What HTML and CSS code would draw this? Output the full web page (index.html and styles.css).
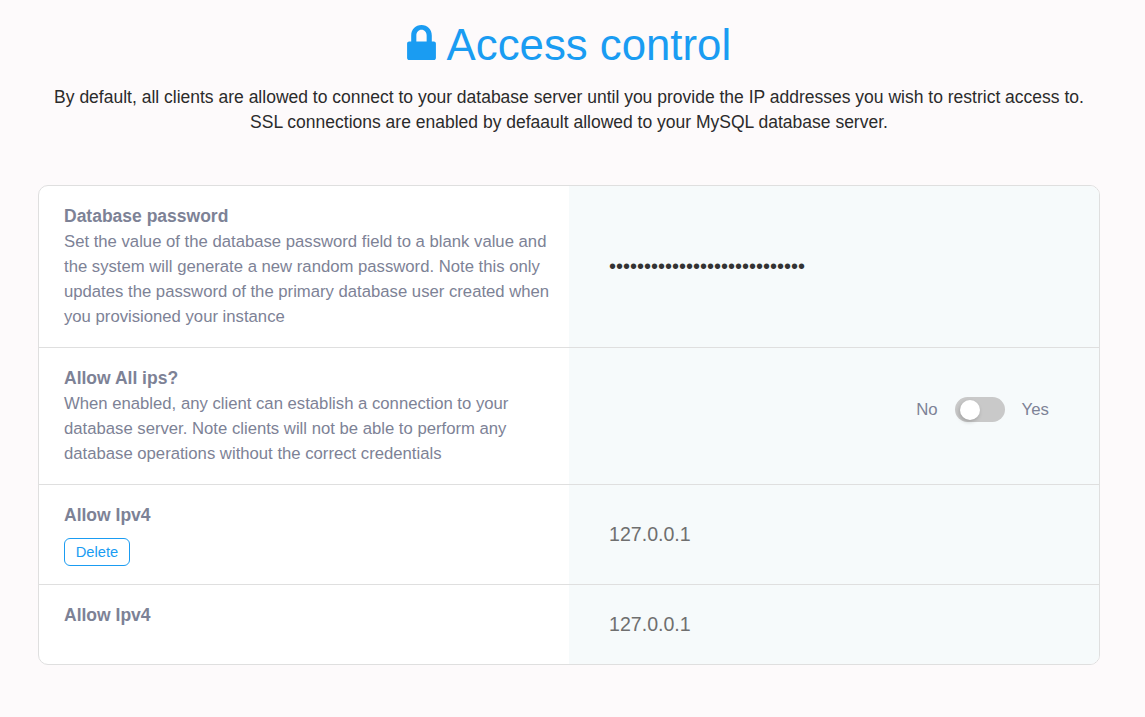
FILE: index.html
```html
<!DOCTYPE html>
<html lang="en">
<head>
    <meta charset="UTF-8">
    <meta name="viewport" content="width=device-width, initial-scale=1.0">
    <title>Access control</title>
    <link rel="stylesheet" href="styles.css">
</head>
<body>
    <header class="intro">
        <h1>
            <svg class="lock" viewBox="0 0 28 34" aria-hidden="true">
                <path d="M14 0C8.2 0 4 4.4 4 10.2V16H2C.9 16 0 16.9 0 18V32C0 33.1.9 34 2 34H26C27.1 34 28 33.1 28 32V18C28 16.9 27.1 16 26 16H24V10.2C24 4.4 19.8 0 14 0ZM14 4.6C17 4.6 19 7 19 10.2V16H9V10.2C9 7 11 4.6 14 4.6Z"/>
            </svg>
            Access control
        </h1>
        <p>By default, all clients are allowed to connect to your database server until you provide the IP addresses you wish to restrict access to.<br>SSL connections are enabled by defaault allowed to your MySQL database server.</p>
    </header>

    <section class="card">
        <div class="row row-password">
            <div class="info">
                <h3>Database password</h3>
                <p>Set the value of the database password field to a blank value and the system will generate a new random password. Note this only updates the password of the primary database user created when you provisioned your instance</p>
            </div>
            <div class="field">
                <span class="dots">••••••••••••••••••••••••••••</span>
            </div>
        </div>
        <div class="row row-allow">
            <div class="info">
                <h3>Allow All ips?</h3>
                <p>When enabled, any client can establish a connection to your database server. Note clients will not be able to perform any database operations without the correct credentials</p>
            </div>
            <div class="field field-toggle">
                <span>No</span>
                <span class="toggle"><span class="knob"></span></span>
                <span>Yes</span>
            </div>
        </div>
        <div class="row row-ip">
            <div class="info">
                <h3>Allow Ipv4</h3>
                <button class="btn-delete" type="button">Delete</button>
            </div>
            <div class="field">
                <span class="ip">127.0.0.1</span>
            </div>
        </div>
        <div class="row row-ip-last">
            <div class="info">
                <h3>Allow Ipv4</h3>
            </div>
            <div class="field">
                <span class="ip">127.0.0.1</span>
            </div>
        </div>
    </section>
</body>
</html>
```

FILE: styles.css
```css
body {
    font-family: "Liberation Sans", Arial, sans-serif;
    margin: 0;
    padding: 0 45px 52px 38px;
    background-color: #fdfafb;
    color: #2b2b2b;
}
.intro {
    text-align: center;
    height: 185px;
    padding-top: 19px;
    box-sizing: border-box;
}
.intro h1 {
    margin: 0;
    font-size: 43.75px;
    font-weight: 400;
    line-height: 52px;
    color: #1a9cf2;
}
.intro p {
    margin: 14px -20px 0;
    font-size: 17.5px;
    line-height: 25px;
}
.lock {
    width: 29px;
    height: 35px;
    margin-right: 1px;
    fill: #1a9cf2;
}
.card {
    border: 1px solid #dfdfdf;
    border-radius: 10px;
    background-color: #fff;
    overflow: hidden;
}
.row {
    display: grid;
    grid-template-columns: 530px 1fr;
    border-bottom: 1px solid #dfdfdf;
}
.row:last-child {
    border-bottom: 0;
}
.row-password { height: 161px; }
.row-allow { height: 136px; }
.row-ip { height: 99px; }
.row-ip-last { height: 79px; }
.info {
    padding: 20px 15px 0 25px;
}
.info h3 {
    margin: 0;
    font-size: 17.5px;
    line-height: 20px;
    font-weight: 700;
    color: #7d8296;
}
.info p {
    margin: 3px 0 0;
    font-size: 16.7px;
    line-height: 25px;
    color: #7d8296;
}
.field {
    background-color: #f6fafb;
    padding-left: 40px;
    display: flex;
    align-items: center;
}
.dots {
    font-size: 20px;
    color: #333;
}
.ip {
    font-size: 19.6px;
    color: #6f6f6f;
}
.field-toggle {
    justify-content: flex-end;
    gap: 17px;
    padding-right: 50px;
    padding-bottom: 13px;
    font-size: 16.8px;
    color: #7d8296;
}
.toggle {
    width: 50px;
    height: 25px;
    border-radius: 13px;
    background-color: #c9c9c9;
    position: relative;
}
.knob {
    position: absolute;
    left: 5px;
    top: 3px;
    width: 20px;
    height: 20px;
    border-radius: 50%;
    background-color: #fff;
    box-shadow: -1px 2px 4px rgba(0, 0, 0, 0.2);
}
.btn-delete {
    display: block;
    margin-top: 13px;
    width: 66px;
    height: 28px;
    padding: 0;
    border: 1px solid #1a9cf2;
    border-radius: 6px;
    background: #fff;
    color: #1a9cf2;
    font-family: inherit;
    font-size: 14.7px;
}
```
